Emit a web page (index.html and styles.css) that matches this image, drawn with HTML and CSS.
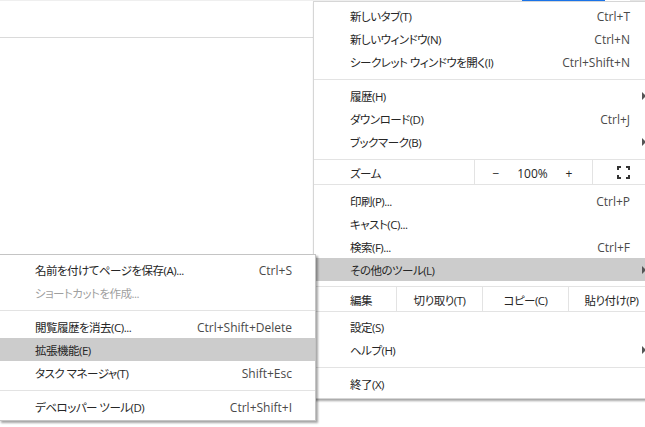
FILE: index.html
```html
<!DOCTYPE html>
<html lang="ja">
<head>
<meta charset="utf-8">
<link rel="stylesheet" href="styles.css">
</head>
<body>
<div class="topstrip"><span class="strip-gray-a"></span><span class="strip-blue"></span><span class="strip-white"></span><span class="strip-gray-b"></span></div>
<div class="toolbar"></div>
<div class="page"></div>

<div class="menu main-menu">
  <div class="item"><span class="label">新しいタブ(T)</span><span class="key">Ctrl+T</span><span class="slot"></span></div>
  <div class="item"><span class="label">新しいウィンドウ(N)</span><span class="key">Ctrl+N</span><span class="slot"></span></div>
  <div class="item"><span class="label">シークレット ウィンドウを開く(I)</span><span class="key">Ctrl+Shift+N</span><span class="slot"></span></div>
  <div class="sep"></div>
  <div class="item"><span class="label">履歴(H)</span><span class="slot"><span class="arrow"></span></span></div>
  <div class="item"><span class="label">ダウンロード(D)</span><span class="key">Ctrl+J</span><span class="slot"></span></div>
  <div class="item"><span class="label">ブックマーク(B)</span><span class="slot"><span class="arrow"></span></span></div>
  <div class="split-row zoom-row">
    <div class="row-label zoom-label">ズーム</div>
    <div class="zoom-ctrl"><span>−</span><span>100%</span><span>+</span></div>
    <div class="fs-cell">
      <svg class="fs-icon" width="13" height="13" viewBox="0 0 13 13" fill="#333">
        <path d="M0 0H4V2H2V4H0Z M9 0H13V4H11V2H9Z M13 9V13H9V11H11V9Z M0 9H2V11H4V13H0Z"/>
      </svg>
    </div>
  </div>
  <div class="item"><span class="label">印刷(P)...</span><span class="key">Ctrl+P</span><span class="slot"></span></div>
  <div class="item"><span class="label">キャスト(C)...</span><span class="slot"></span></div>
  <div class="item"><span class="label">検索(F)...</span><span class="key">Ctrl+F</span><span class="slot"></span></div>
  <div class="item hl"><span class="label">その他のツール(L)</span><span class="slot"><span class="arrow"></span></span></div>
  <div class="split-row edit-row">
    <div class="row-label edit-label">編集</div>
    <div class="edit-cell">切り取り(T)</div>
    <div class="edit-cell">コピー(C)</div>
    <div class="edit-cell">貼り付け(P)</div>
  </div>
  <div class="item"><span class="label">設定(S)</span><span class="slot"></span></div>
  <div class="item"><span class="label">ヘルプ(H)</span><span class="slot"><span class="arrow"></span></span></div>
  <div class="sep"></div>
  <div class="item"><span class="label">終了(X)</span><span class="slot"></span></div>
</div>

<div class="menu sub-menu">
  <div class="item"><span class="label">名前を付けてページを保存(A)...</span><span class="key">Ctrl+S</span></div>
  <div class="item disabled"><span class="label">ショートカットを作成...</span></div>
  <div class="sep"></div>
  <div class="item"><span class="label">閲覧履歴を消去(C)...</span><span class="key">Ctrl+Shift+Delete</span></div>
  <div class="item hl"><span class="label">拡張機能(E)</span></div>
  <div class="item"><span class="label">タスク マネージャ(T)</span><span class="key">Shift+Esc</span></div>
  <div class="sep"></div>
  <div class="item"><span class="label">デベロッパー ツール(D)</span><span class="key">Ctrl+Shift+I</span></div>
</div>
</body>
</html>
```
FILE: styles.css
```css
* { box-sizing: border-box; }

body {
  margin: 0;
  width: 645px;
  height: 427px;
  overflow: hidden;
  position: relative;
  background: #fff;
  font-family: "Open Sans", "Noto Sans CJK JP", sans-serif;
  font-size: 12px;
  color: #262626;
  font-feature-settings: "palt";
}

.topstrip { display: flex; height: 1px; }
.strip-gray-a { width: 522px; background: #efefef; }
.strip-blue { width: 83px; background: #1a73e8; }
.strip-white { width: 25px; background: #fff; }
.strip-gray-b { flex: 1; background: #e6e6e6; }

.toolbar { height: 37px; border-bottom: 1px solid #dadada; }
.page { height: 389px; }

.menu {
  position: absolute;
  background: #fff;
}

.main-menu {
  left: 313px;
  top: 1px;
  width: 342px;
  border: 1px solid #d6d6d6;
  padding: 2px 0 3px;
  box-shadow: 1px 2px 2px rgba(0, 0, 0, 0.35);
}

.item {
  display: flex;
  align-items: center;
  height: 23px;
  line-height: 23px;
  padding-left: 36px;
  padding-top: 2px;
  white-space: nowrap;
}

.label,
.row-label,
.edit-cell {
  font-size: 11.5px;
  letter-spacing: -0.5px;
}

.label { flex: 1; }
.key { color: #4a4a4a; }

.slot {
  width: 24px;
  flex: none;
  display: flex;
  align-items: center;
  padding-left: 12px;
  margin-top: -2px;
}

.arrow {
  width: 0;
  height: 0;
  border-left: 4px solid #555;
  border-top: 4px solid transparent;
  border-bottom: 4px solid transparent;
}

.hl { background: #cccccc; }

.sep {
  height: 1px;
  background: #e3e3e3;
  margin: 6px 0 4px;
}

.split-row {
  display: flex;
  height: 26px;
  border-top: 1px solid #e3e3e3;
  border-bottom: 1px solid #e3e3e3;
  white-space: nowrap;
}

.zoom-row { margin: 6px 0 4px; }
.edit-row { margin: 5px 0 3px; }

.row-label {
  display: flex;
  align-items: center;
  padding-left: 36px;
  padding-top: 2px;
}
.zoom-label { width: 160px; }
.edit-label { width: 82px; }

.zoom-ctrl {
  width: 118px;
  border-left: 1px solid #e3e3e3;
  display: grid;
  grid-template-columns: 42px 31px 42px;
  align-items: center;
  justify-items: center;
  padding-top: 2px;
}

.fs-cell {
  flex: 1;
  border-left: 1px solid #e3e3e3;
  display: flex;
  align-items: center;
  justify-content: center;
  padding-top: 1px;
}

.edit-cell {
  width: 86px;
  border-left: 1px solid #e3e3e3;
  display: flex;
  align-items: center;
  justify-content: center;
  padding-top: 2px;
}

.sub-menu {
  left: -1px;
  top: 254px;
  width: 317px;
  border: 1px solid #c4c4c4;
  padding: 3px 0 2px;
  box-shadow: 2px 2px 2px rgba(0, 0, 0, 0.35);
}

.sub-menu .item {
  padding-left: 35px;
  padding-right: 23px;
}

.disabled { color: #a0a0a0; }
```
